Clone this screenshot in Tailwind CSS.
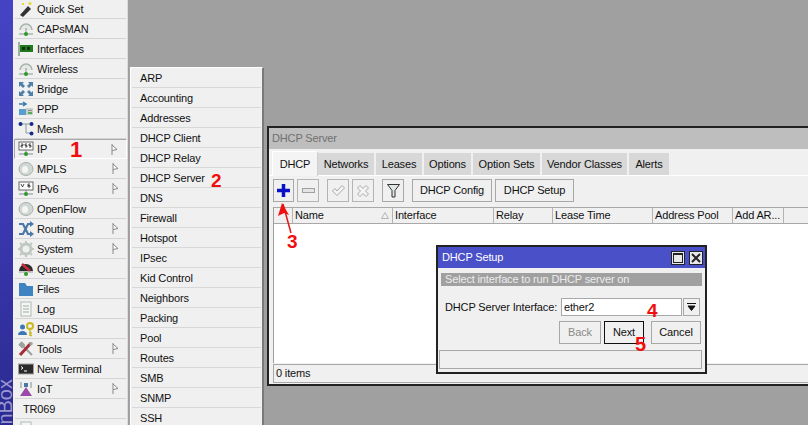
<!DOCTYPE html>
<html><head><script src="https://cdn.jsdelivr.net/npm/@tailwindcss/browser@4"></script></head>
<body class="m-0">
<div class="relative w-[808px] h-[425px] overflow-hidden bg-[#a0a0a0] flex font-['Liberation_Sans',sans-serif] text-[11px] tracking-[-0.15px] leading-none text-[#111] whitespace-nowrap">
  <!-- strip -->
  <div class="relative w-[13px] h-full bg-gradient-to-b from-[#4444c4] via-[#3a38b0] to-[#2a2a90] overflow-hidden shrink-0">
    <span class="absolute left-[-5px] bottom-[0px] [writing-mode:vertical-rl] rotate-180 text-[20px] tracking-normal text-[#9a98d0] leading-[20px]">nBox</span>
  </div>
  <!-- main menu -->
  <div class="w-[115px] h-[445px] bg-[#f0f0f0] border-r border-r-[#dcdcdc] shrink-0 -mt-px flex flex-col pl-[2px] pr-[1px]">
    <div class="h-5 shrink-0 flex items-center border-b border-[#d4d4d4]"><svg class="w-[16px] h-[16px] mx-[3px] shrink-0" viewBox="0 0 16 16"><path d="M2 14 10 5l3 3-8 8z" fill="#333"/><path d="M4 3h2M5 2v2M12 1v3M10.500 2.500h3" stroke="#e5d820" stroke-width="1.500"/></svg><span class="mt-px">Quick Set</span></div>
    <div class="h-5 shrink-0 flex items-center border-b border-[#d4d4d4]"><svg class="w-[16px] h-[16px] mx-[3px] shrink-0" viewBox="0 0 16 16"><path d="M2 9a6 6 0 0 1 12 0" fill="#e4e8e4" stroke="#a8b4ac" stroke-width="1.500"/><path d="M8 7v6M1 13h14" stroke="#8a958d"/><circle cx="8" cy="13" r="2" fill="#2a9a2a"/></svg><span class="mt-px">CAPsMAN</span></div>
    <div class="h-5 shrink-0 flex items-center border-b border-[#d4d4d4]"><svg class="w-[16px] h-[16px] mx-[3px] shrink-0" viewBox="0 0 16 16"><rect x="0" y="1" width="2" height="14" fill="#9ab0a0"/><rect x="2" y="4" width="13" height="7" fill="#1d7a1d"/><rect x="4" y="6" width="3" height="3" fill="#14320f"/><rect x="9" y="6" width="3" height="3" fill="#14320f"/></svg><span class="mt-px">Interfaces</span></div>
    <div class="h-5 shrink-0 flex items-center border-b border-[#d4d4d4]"><svg class="w-[16px] h-[16px] mx-[3px] shrink-0" viewBox="0 0 16 16"><path d="M2 9a6 6 0 0 1 12 0" fill="#e4e8e4" stroke="#a8b4ac" stroke-width="1.500"/><path d="M8 7v6M1 13h14" stroke="#8a958d"/><circle cx="8" cy="13" r="2" fill="#2a9a2a"/></svg><span class="mt-px">Wireless</span></div>
    <div class="h-5 shrink-0 flex items-center border-b border-[#d4d4d4]"><svg class="w-[16px] h-[16px] mx-[3px] shrink-0" viewBox="0 0 16 16" fill="#4f7fa8"><path d="M1 1h5L4.500 2.500 7 5 5 7 2.500 4.500 1 6zM15 1v5l-1.500-1.500L11 7 9 5l2.500-2.500L10 1zM1 15v-5l1.500 1.500L5 9l2 2-2.500 2.500L6 15zM15 15h-5l1.500-1.500L9 11l2-2 2.500 2.500L15 10z"/></svg><span class="mt-px">Bridge</span></div>
    <div class="h-5 shrink-0 flex items-center border-b border-[#d4d4d4]"><svg class="w-[16px] h-[16px] mx-[3px] shrink-0" viewBox="0 0 16 16"><path d="M1 3h6M5 1l3 2-3 2" stroke="#3a78b0" stroke-width="1.500" fill="none"/><rect x="1" y="8" width="7" height="6" fill="#5a9ed0"/><rect x="8" y="7" width="7" height="7" fill="#c8cec8"/><path d="M10 12h4" stroke="#30a030" stroke-width="1.500"/><path d="M10 9.500h4" stroke="#8a908a"/></svg><span class="mt-px">PPP</span></div>
    <div class="h-5 shrink-0 flex items-center border-b border-[#d4d4d4]"><svg class="w-[16px] h-[16px] mx-[3px] shrink-0" viewBox="0 0 16 16"><path d="M2 3h12M8 3v9h6" stroke="#8a9a9a" fill="none"/><circle cx="2.500" cy="3" r="2" fill="#1a2a8a"/><circle cx="13.500" cy="3" r="2" fill="#1a2a8a"/><circle cx="13.500" cy="12.500" r="2" fill="#1a2a8a"/></svg><span class="mt-px">Mesh</span></div>
    <div class="h-5 shrink-0 flex items-center justify-between border border-[#a8a8a8] border-b-white border-r-white relative -ml-px -mr-px"><div class="flex items-center"><svg class="w-[16px] h-[16px] mx-[3px] shrink-0" viewBox="0 0 16 16"><rect x="1" y="1" width="14" height="8" fill="#fff" stroke="#666"/><path d="M3 3h2v1.500H3V6h2M7 3h2M7 3v1.500h2V6H7M11 3h2M11 3v1.500h2V6h-2" stroke="#222" fill="none" stroke-width=".8"/><path d="M8 9v4M1 13h14" stroke="#889"/><circle cx="8" cy="13" r="2" fill="#2a9a2a"/></svg><span class="mt-px">IP</span></div><svg class="w-[7px] h-[11px] mr-[8px]" viewBox="0 0 7 11"><path d="M1 0v11M1 1l5 4.500-5 1" stroke="#888" fill="#fff"/></svg></div>
    <div class="h-5 shrink-0 flex items-center justify-between border-b border-[#d4d4d4]"><div class="flex items-center"><svg class="w-[16px] h-[16px] mx-[3px] shrink-0" viewBox="0 0 16 16"><ellipse cx="8" cy="8" rx="7" ry="6.500" fill="#d0d8d4" stroke="#a8b0ac"/><ellipse cx="7" cy="8.500" rx="3" ry="3.500" fill="#f4f6f4"/></svg><span class="mt-px">MPLS</span></div><svg class="w-[7px] h-[11px] mr-[7px]" viewBox="0 0 7 11"><path d="M1 0v11M1 1l5 4.500-5 1" stroke="#888" fill="#fff"/></svg></div>
    <div class="h-5 shrink-0 flex items-center justify-between border-b border-[#d4d4d4]"><div class="flex items-center"><svg class="w-[16px] h-[16px] mx-[3px] shrink-0" viewBox="0 0 16 16"><rect x="1" y="1" width="14" height="8" fill="#fff" stroke="#666"/><path d="M3 3l1.500 3L6 3M12 3h-2v3h2V4.500h-2" stroke="#222" fill="none" stroke-width=".8"/><path d="M8 9v4M1 13h14" stroke="#889"/><circle cx="8" cy="13" r="2" fill="#2a9a2a"/></svg><span class="mt-px">IPv6</span></div><svg class="w-[7px] h-[11px] mr-[7px]" viewBox="0 0 7 11"><path d="M1 0v11M1 1l5 4.500-5 1" stroke="#888" fill="#fff"/></svg></div>
    <div class="h-5 shrink-0 flex items-center border-b border-[#d4d4d4]"><svg class="w-[16px] h-[16px] mx-[3px] shrink-0" viewBox="0 0 16 16"><ellipse cx="8" cy="8" rx="7" ry="6.500" fill="#d0d8d4" stroke="#a8b0ac"/><ellipse cx="7" cy="8.500" rx="3" ry="3.500" fill="#f4f6f4"/></svg><span class="mt-px">OpenFlow</span></div>
    <div class="h-5 shrink-0 flex items-center justify-between border-b border-[#d4d4d4]"><div class="flex items-center"><svg class="w-[16px] h-[16px] mx-[3px] shrink-0" viewBox="0 0 16 16"><path d="M1 3h4l5 10h3M1 13h4l5-10h3" stroke="#4a78a8" stroke-width="2.200" fill="none"/><path d="M12 0l4 3-4 3zM12 10l4 3-4 3z" fill="#4a78a8"/></svg><span class="mt-px">Routing</span></div><svg class="w-[7px] h-[11px] mr-[7px]" viewBox="0 0 7 11"><path d="M1 0v11M1 1l5 4.500-5 1" stroke="#888" fill="#fff"/></svg></div>
    <div class="h-5 shrink-0 flex items-center justify-between border-b border-[#d4d4d4]"><div class="flex items-center"><svg class="w-[16px] h-[16px] mx-[3px] shrink-0" viewBox="0 0 16 16"><circle cx="8" cy="8" r="5" fill="none" stroke="#c0c8c2" stroke-width="3"/><path d="M8 0v3M8 13v3M0 8h3M13 8h3M2 2l2 2M12 12l2 2M14 2l-2 2M4 12l-2 2" stroke="#c0c8c2" stroke-width="2"/></svg><span class="mt-px">System</span></div><svg class="w-[7px] h-[11px] mr-[7px]" viewBox="0 0 7 11"><path d="M1 0v11M1 1l5 4.500-5 1" stroke="#888" fill="#fff"/></svg></div>
    <div class="h-5 shrink-0 flex items-center border-b border-[#d4d4d4]"><svg class="w-[16px] h-[16px] mx-[3px] shrink-0" viewBox="0 0 16 16"><path d="M1 10a7 7 0 0 1 14 0z" fill="#2a2a2a"/><path d="M4 3l8 7" stroke="#c82a3a" stroke-width="2.500"/><path d="M1 11h14" stroke="#999"/><circle cx="8" cy="13" r="2" fill="#2a9a2a"/></svg><span class="mt-px">Queues</span></div>
    <div class="h-5 shrink-0 flex items-center border-b border-[#d4d4d4]"><svg class="w-[16px] h-[16px] mx-[3px] shrink-0" viewBox="0 0 16 16"><path d="M1 2h6l2 3h6v10H1z" fill="#3f84c0"/></svg><span class="mt-px">Files</span></div>
    <div class="h-5 shrink-0 flex items-center border-b border-[#d4d4d4]"><svg class="w-[16px] h-[16px] mx-[3px] shrink-0" viewBox="0 0 16 16"><rect x="3" y="1" width="10" height="14" fill="#f4f6f4" stroke="#b0bab4"/><path d="M5 5h6M5 8h6M5 11h6" stroke="#a0aaa4"/></svg><span class="mt-px">Log</span></div>
    <div class="h-5 shrink-0 flex items-center border-b border-[#d4d4d4]"><svg class="w-[16px] h-[16px] mx-[3px] shrink-0" viewBox="0 0 16 16"><circle cx="4.500" cy="6" r="2.500" fill="#3a78b8"/><path d="M0 14a4.500 4 0 0 1 9 0z" fill="#3a78b8"/><circle cx="12" cy="5" r="3" fill="none" stroke="#c8b820" stroke-width="2"/><path d="M12 8v7M12 12h2M12 14.500h2" stroke="#c8b820" stroke-width="1.500"/></svg><span class="mt-px">RADIUS</span></div>
    <div class="h-5 shrink-0 flex items-center justify-between border-b border-[#d4d4d4]"><div class="flex items-center"><svg class="w-[16px] h-[16px] mx-[3px] shrink-0" viewBox="0 0 16 16"><path d="M2 2l12 12M3 1l3 3-2 2-3-3" stroke="#9aa29c" stroke-width="2" fill="none"/><path d="M13 2L2 14" stroke="#a82a3a" stroke-width="3"/><path d="M11 2l3-1 1 2-3 2z" fill="#9aa29c"/></svg><span class="mt-px">Tools</span></div><svg class="w-[7px] h-[11px] mr-[7px]" viewBox="0 0 7 11"><path d="M1 0v11M1 1l5 4.500-5 1" stroke="#888" fill="#fff"/></svg></div>
    <div class="h-5 shrink-0 flex items-center border-b border-[#d4d4d4]"><svg class="w-[16px] h-[16px] mx-[3px] shrink-0" viewBox="0 0 16 16"><rect x="0.500" y="3" width="15" height="10" fill="#2a2a2a" stroke="#a0a0a0"/><path d="M3 5.500l2 1.500-2 1.500M6 10h3" stroke="#fff" fill="none"/></svg><span class="mt-px">New Terminal</span></div>
    <div class="h-5 shrink-0 flex items-center justify-between border-b border-[#d4d4d4]"><div class="flex items-center"><svg class="w-[16px] h-[16px] mx-[3px] shrink-0" viewBox="0 0 16 16"><path d="M8 6l6 9H2z" fill="#9a4aa8"/><rect x="6" y="2" width="4" height="4" fill="#4a78a8"/><path d="M3 1v6M13 1v6" stroke="#a8b0ac" stroke-width="1.500"/></svg><span class="mt-px">IoT</span></div><svg class="w-[7px] h-[11px] mr-[7px]" viewBox="0 0 7 11"><path d="M1 0v11M1 1l5 4.500-5 1" stroke="#888" fill="#fff"/></svg></div>
    <div class="h-5 shrink-0 flex items-center border-b border-[#d4d4d4]"><span class="ml-[8px] mt-px">TR069</span></div>
    <div class="h-5 shrink-0 flex items-center"><svg class="w-[16px] h-[16px] mx-[3px] shrink-0" viewBox="0 0 16 16"><rect x="3" y="1" width="10" height="14" fill="#f4f6f4" stroke="#b0bab4"/></svg></div>
  </div>

  <!-- submenu -->
  <div class="absolute left-[130px] top-[67px] w-[134px] h-[360px] bg-[#f0f0f0] border-t border-l border-white border-r-2 border-r-[#7a7a7a] flex flex-col pl-[1px] pr-[1px] [&>div]:pt-px">
    <div class="h-5 shrink-0 flex items-center pl-[8px] border-b border-[#d8d8d8]">ARP</div>
    <div class="h-5 shrink-0 flex items-center pl-[8px] border-b border-[#d8d8d8]">Accounting</div>
    <div class="h-5 shrink-0 flex items-center pl-[8px] border-b border-[#d8d8d8]">Addresses</div>
    <div class="h-5 shrink-0 flex items-center pl-[8px] border-b border-[#d8d8d8]">DHCP Client</div>
    <div class="h-5 shrink-0 flex items-center pl-[8px] border-b border-[#d8d8d8]">DHCP Relay</div>
    <div class="h-5 shrink-0 flex items-center pl-[8px] border-b border-[#d8d8d8]">DHCP Server</div>
    <div class="h-5 shrink-0 flex items-center pl-[8px] border-b border-[#d8d8d8]">DNS</div>
    <div class="h-5 shrink-0 flex items-center pl-[8px] border-b border-[#d8d8d8]">Firewall</div>
    <div class="h-5 shrink-0 flex items-center pl-[8px] border-b border-[#d8d8d8]">Hotspot</div>
    <div class="h-5 shrink-0 flex items-center pl-[8px] border-b border-[#d8d8d8]">IPsec</div>
    <div class="h-5 shrink-0 flex items-center pl-[8px] border-b border-[#d8d8d8]">Kid Control</div>
    <div class="h-5 shrink-0 flex items-center pl-[8px] border-b border-[#d8d8d8]">Neighbors</div>
    <div class="h-5 shrink-0 flex items-center pl-[8px] border-b border-[#d8d8d8]">Packing</div>
    <div class="h-5 shrink-0 flex items-center pl-[8px] border-b border-[#d8d8d8]">Pool</div>
    <div class="h-5 shrink-0 flex items-center pl-[8px] border-b border-[#d8d8d8]">Routes</div>
    <div class="h-5 shrink-0 flex items-center pl-[8px] border-b border-[#d8d8d8]">SMB</div>
    <div class="h-5 shrink-0 flex items-center pl-[8px] border-b border-[#d8d8d8]">SNMP</div>
    <div class="h-5 shrink-0 flex items-center pl-[8px] border-b border-[#d8d8d8]">SSH</div>
  </div>

  <!-- DHCP Server window -->
  <div class="absolute left-[267px] top-[126px] w-[560px] h-[260px] bg-[#f0f0f0] border-2 border-[#222] flex flex-col">
    <div class="h-[21px] shrink-0 bg-[#bebebe] flex items-center pl-[3px] text-[#707070]">DHCP Server</div>
    <!-- tabs -->
    <div class="h-[27px] shrink-0 flex items-end pl-[3px] border-b border-white bg-[#f0f0f0]">
      <div class="w-[46px] h-[25px] flex items-center justify-center bg-[#f4f4f4] border border-b-0 border-[#d0d0d0] border-t-white border-l-white -mb-px">DHCP</div>
      <div class="w-[58px] h-[22px] flex items-center justify-center bg-[#d8d8d8] border-r-2 border-[#f0f0f0]">Networks</div>
      <div class="w-[48px] h-[22px] flex items-center justify-center bg-[#d8d8d8] border-r-2 border-[#f0f0f0]">Leases</div>
      <div class="w-[49px] h-[22px] flex items-center justify-center bg-[#d8d8d8] border-r-2 border-[#f0f0f0]">Options</div>
      <div class="w-[69px] h-[22px] flex items-center justify-center bg-[#d8d8d8] border-r-2 border-[#f0f0f0]">Option Sets</div>
      <div class="w-[87px] h-[22px] flex items-center justify-center bg-[#d8d8d8] border-r-2 border-[#f0f0f0]">Vendor Classes</div>
      <div class="w-[40px] h-[22px] flex items-center justify-center bg-[#d8d8d8]">Alerts</div>
    </div>
    <!-- toolbar -->
    <div class="h-[29px] shrink-0 flex items-center pl-[4px]">
      <div class="w-[21px] h-[23px] border border-[#a8a8a8] flex items-center justify-center mr-[3px]"><svg class="w-[13px] h-[13px]" viewBox="0 0 13 13"><path d="M6.500 0v13M0 6.500h13" stroke="#0a10c8" stroke-width="3.500"/></svg></div>
      <div class="w-[22px] h-[23px] border border-[#b4b4b4] flex items-center justify-center mr-[8px]"><svg class="w-[13px] h-[5px]" viewBox="0 0 13 5"><rect x=".5" y=".5" width="12" height="4" fill="#e4e4e4" stroke="#a0a0a0"/></svg></div>
      <div class="w-[22px] h-[23px] border border-[#b4b4b4] flex items-center justify-center mr-[3px]"><svg class="w-[13px] h-[11px]" viewBox="0 0 13 11"><path d="M.5 6L3 3.500 5 6 10 .5 12.500 3 5 10.500z" fill="#f4f4f4" stroke="#a8a8a8"/></svg></div>
      <div class="w-[22px] h-[23px] border border-[#b4b4b4] flex items-center justify-center mr-[8px]"><svg class="w-[12px] h-[12px]" viewBox="0 0 12 12"><path d="M3 .5L6 3.500 9 .5 11.500 3 8.500 6 11.500 9 9 11.500 6 8.500 3 11.500 .5 9 3.500 6 .5 3z" fill="#f4f4f4" stroke="#a8a8a8"/></svg></div>
      <div class="w-[22px] h-[23px] border border-[#a8a8a8] flex items-center justify-center mr-[8px]"><svg class="w-[13px] h-[14px]" viewBox="0 0 13 14"><path d="M.5.5h12L8 6.500V13H5V6.500z" fill="#dfe6e6" stroke="#333"/></svg></div>
      <div class="w-[80px] h-[23px] border border-[#a8a8a8] flex items-center justify-center mr-[3px]">DHCP Config</div>
      <div class="w-[79px] h-[23px] border border-[#a8a8a8] flex items-center justify-center">DHCP Setup</div>
    </div>
    <!-- table -->
    <div class="ml-[4px] border-l border-[#a0a0a0] mt-[2px] h-[156px] shrink-0 bg-white flex flex-col">
      <div class="h-[17px] shrink-0 bg-[#f0f0f0] border-t border-b border-[#a8a8a8] flex">
        <div class="w-[19px] border-r border-[#b4b4b4]"></div>
        <div class="w-[100px] border-r border-[#b4b4b4] flex items-center justify-between pl-[2px] pr-[3px]">Name<svg class="w-[8px] h-[7px]" viewBox="0 0 8 7"><path d="M4 .5L7.500 6.500H.5z" fill="none" stroke="#b4b4b4"/></svg></div>
        <div class="w-[101px] border-r border-[#b4b4b4] flex items-center pl-[2px]">Interface</div>
        <div class="w-[59px] border-r border-[#b4b4b4] flex items-center pl-[2px]">Relay</div>
        <div class="w-[100px] border-r border-[#b4b4b4] flex items-center pl-[2px]">Lease Time</div>
        <div class="w-[80px] border-r border-[#b4b4b4] flex items-center pl-[2px]">Address Pool</div>
        <div class="w-[51px] border-r border-[#b4b4b4] flex items-center pl-[2px]">Add AR...</div>
      </div>
    </div>
    <div class="ml-[4px] h-[19px] shrink-0 bg-[#f0f0f0] border border-[#a8a8a8] border-r-0 mt-[1px] flex items-center pl-[2px]">0 items</div>
  </div>

  <!-- DHCP Setup dialog -->
  <div class="absolute left-[436px] top-[245px] w-[271px] h-[129px] bg-[#f0f0f0] border-2 border-[#222] flex flex-col">
    <div class="h-[21px] shrink-0 bg-[#4a50c8] flex items-center justify-between pl-[4px] text-white">
      <span>DHCP Setup</span>
      <div class="flex gap-[4px] mr-[2px]">
        <div class="w-[14px] h-[14px] bg-[#e8e8e8] border border-[#222] flex items-center justify-center"><div class="w-[10px] h-[10px] border border-[#222] border-t-2"></div></div>
        <div class="w-[14px] h-[14px] bg-[#e8e8e8] border border-[#222] flex items-center justify-center"><svg class="w-[10px] h-[10px]" viewBox="0 0 10 10"><path d="M1 1l8 8M9 1l-8 8" stroke="#222" stroke-width="2"/></svg></div>
      </div>
    </div>
    <div class="mx-[3px] mt-[5px] h-[13px] shrink-0 bg-[#a0a0a0] text-[#ececec] flex items-center pl-[4px]">Select interface to run DHCP server on</div>
    <div class="h-[18px] shrink-0 mt-[12px] flex items-center pl-[7px]">
      <span class="w-[116px] shrink-0">DHCP Server Interface:</span>
      <div class="w-[121px] h-[18px] bg-white border border-[#a8a8a8] flex items-center pl-[2px]">ether2</div>
      <div class="w-[17px] h-[18px] ml-[1px] border border-[#a8a8a8] flex items-center justify-center"><svg class="w-[9px] h-[8px]" viewBox="0 0 9 8"><path d="M0 .5h9M1 3h7L4.500 7.500z" stroke="#111" fill="#111"/></svg></div>
    </div>
    <div class="h-[23px] shrink-0 mt-[5px] flex justify-end pr-[4px]">
      <div class="w-[42px] border border-[#a8a8a8] flex items-center justify-center text-[#8a8a8a] mr-[3px]">Back</div>
      <div class="w-[40px] border border-[#111] flex items-center justify-center mr-[7px]">Next</div>
      <div class="w-[50px] border border-[#a8a8a8] flex items-center justify-center">Cancel</div>
    </div>
    <div class="ml-[1px] mr-[3px] mt-[6px] h-[19px] shrink-0 border border-[#a8a8a8]"></div>
  </div>

  <!-- annotations -->
  <span class="absolute left-[70px] top-[139px] text-[22px] font-bold text-[#f00f0f]">1</span>
  <span class="absolute left-[211px] top-[171px] text-[19px] font-bold text-[#f00f0f]">2</span>
  <span class="absolute left-[287px] top-[232px] text-[19px] font-bold text-[#f00f0f]">3</span>
  <span class="absolute left-[647px] top-[301px] text-[19px] font-bold text-[#f00f0f]">4</span>
  <span class="absolute left-[635px] top-[334px] text-[20px] font-bold text-[#f00f0f]">5</span>
  <svg class="absolute left-[275px] top-[200px] w-[20px] h-[36px]" viewBox="0 0 20 36"><path d="M8 4l8 29" stroke="#e01818" stroke-width="1.500"/><path d="M7 3l-4 13 6-3 5 2z" fill="#f01010"/></svg>
</div>
</body></html>
